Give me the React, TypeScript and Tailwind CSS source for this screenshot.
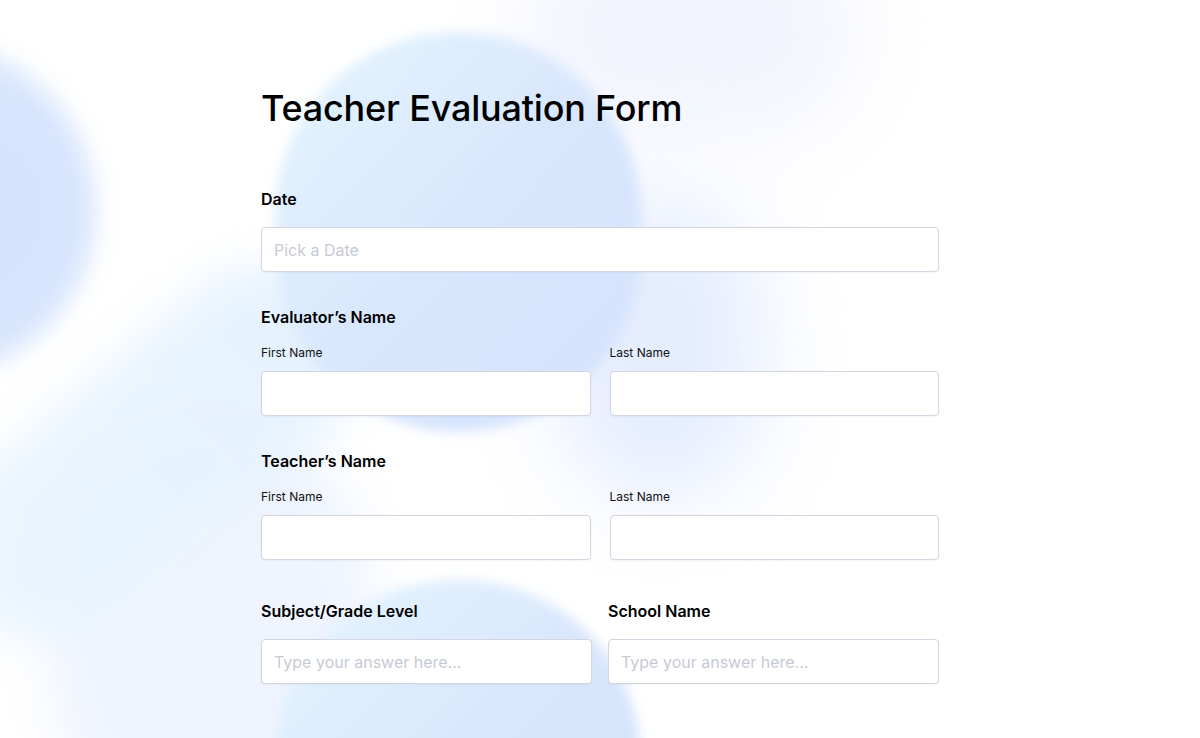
import React from 'react';

function Label({ children }: { children: React.ReactNode }) {
  return <div className="text-[16px] leading-6 font-semibold text-black">{children}</div>;
}

function SubLabel({ children }: { children: React.ReactNode }) {
  return <div className="text-[12px] leading-4 text-[#111]">{children}</div>;
}

function Field({ placeholder = '' }: { placeholder?: string }) {
  return (
    <input
      type="text"
      placeholder={placeholder}
      className="w-full h-[45px] px-3 bg-white border border-[#d3d6e0] rounded-[4px] shadow-[0_1px_2px_rgba(30,50,110,0.06)] text-[16px] text-gray-800 placeholder:text-[#c6cad6] outline-none"
    />
  );
}

function NameGroup({ title }: { title: string }) {
  return (
    <div>
      <Label>{title}</Label>
      <div className="grid grid-cols-2 gap-[19px] mt-4">
        <div>
          <SubLabel>First Name</SubLabel>
          <div className="mt-[10px]">
            <Field />
          </div>
        </div>
        <div>
          <SubLabel>Last Name</SubLabel>
          <div className="mt-[10px]">
            <Field />
          </div>
        </div>
      </div>
    </div>
  );
}

export default function App() {
  return (
    <div
      className="relative w-full h-[738px] overflow-hidden bg-white"
      style={{ fontFamily: 'Inter, "Noto Sans", sans-serif' }}
    >
      {/* soft background blobs */}
      <div className="absolute inset-0 pointer-events-none">
        <div className="absolute left-[520px] top-[-80px] w-[340px] h-[220px] rounded-full bg-[#f3f5fe] blur-[40px]" />
        <div className="absolute left-[560px] top-[200px] w-[200px] h-[300px] rounded-full bg-[#e4ecfe] blur-[45px]" />
        <div className="absolute left-[50px] top-[420px] w-[320px] h-[420px] rounded-full bg-[#eff4fe] blur-[24px]" />
        <div className="absolute left-[-90px] top-[360px] w-[480px] h-[190px] rounded-[95px] bg-gradient-to-r from-[#eaf5fe] to-[#e3f1fe] -rotate-[40deg] blur-[22px] opacity-90" />
        <div className="absolute left-[-230px] top-[45px] w-[325px] h-[330px] rounded-full bg-[radial-gradient(circle_at_60%_50%,#d3e2fd_0%,#d8e6fd_60%,#e6eefe_100%)] blur-[12px]" />
        <div className="absolute left-[275px] top-[32px] w-[366px] h-[400px] rounded-[183px] bg-gradient-to-br from-[#e4f5fe] via-[#d9e7fd] to-[#d3e2fc] blur-[6px]" />
        <div className="absolute left-[275px] top-[580px] w-[366px] h-[360px] rounded-full bg-gradient-to-br from-[#e4f5fe] via-[#d9e7fd] to-[#d3e2fc] blur-[6px]" />
      </div>

      <div className="relative mx-auto w-[678px] pt-[88px]">
        <h1 className="text-[36px] leading-10 font-medium text-black tracking-[-0.2px]">Teacher Evaluation Form</h1>

        <div className="mt-[59px]">
          <Label>Date</Label>
          <div className="mt-4">
            <Field placeholder="Pick a Date" />
          </div>
        </div>

        <div className="mt-[33px]">
          <NameGroup title="Evaluator’s Name" />
        </div>

        <div className="mt-[33px]">
          <NameGroup title="Teacher’s Name" />
        </div>

        <div className="grid grid-cols-2 gap-4 mt-[39px]">
          <div>
            <Label>Subject/Grade Level</Label>
            <div className="mt-4">
              <Field placeholder="Type your answer here..." />
            </div>
          </div>
          <div>
            <Label>School Name</Label>
            <div className="mt-4">
              <Field placeholder="Type your answer here..." />
            </div>
          </div>
        </div>
      </div>
    </div>
  );
}
